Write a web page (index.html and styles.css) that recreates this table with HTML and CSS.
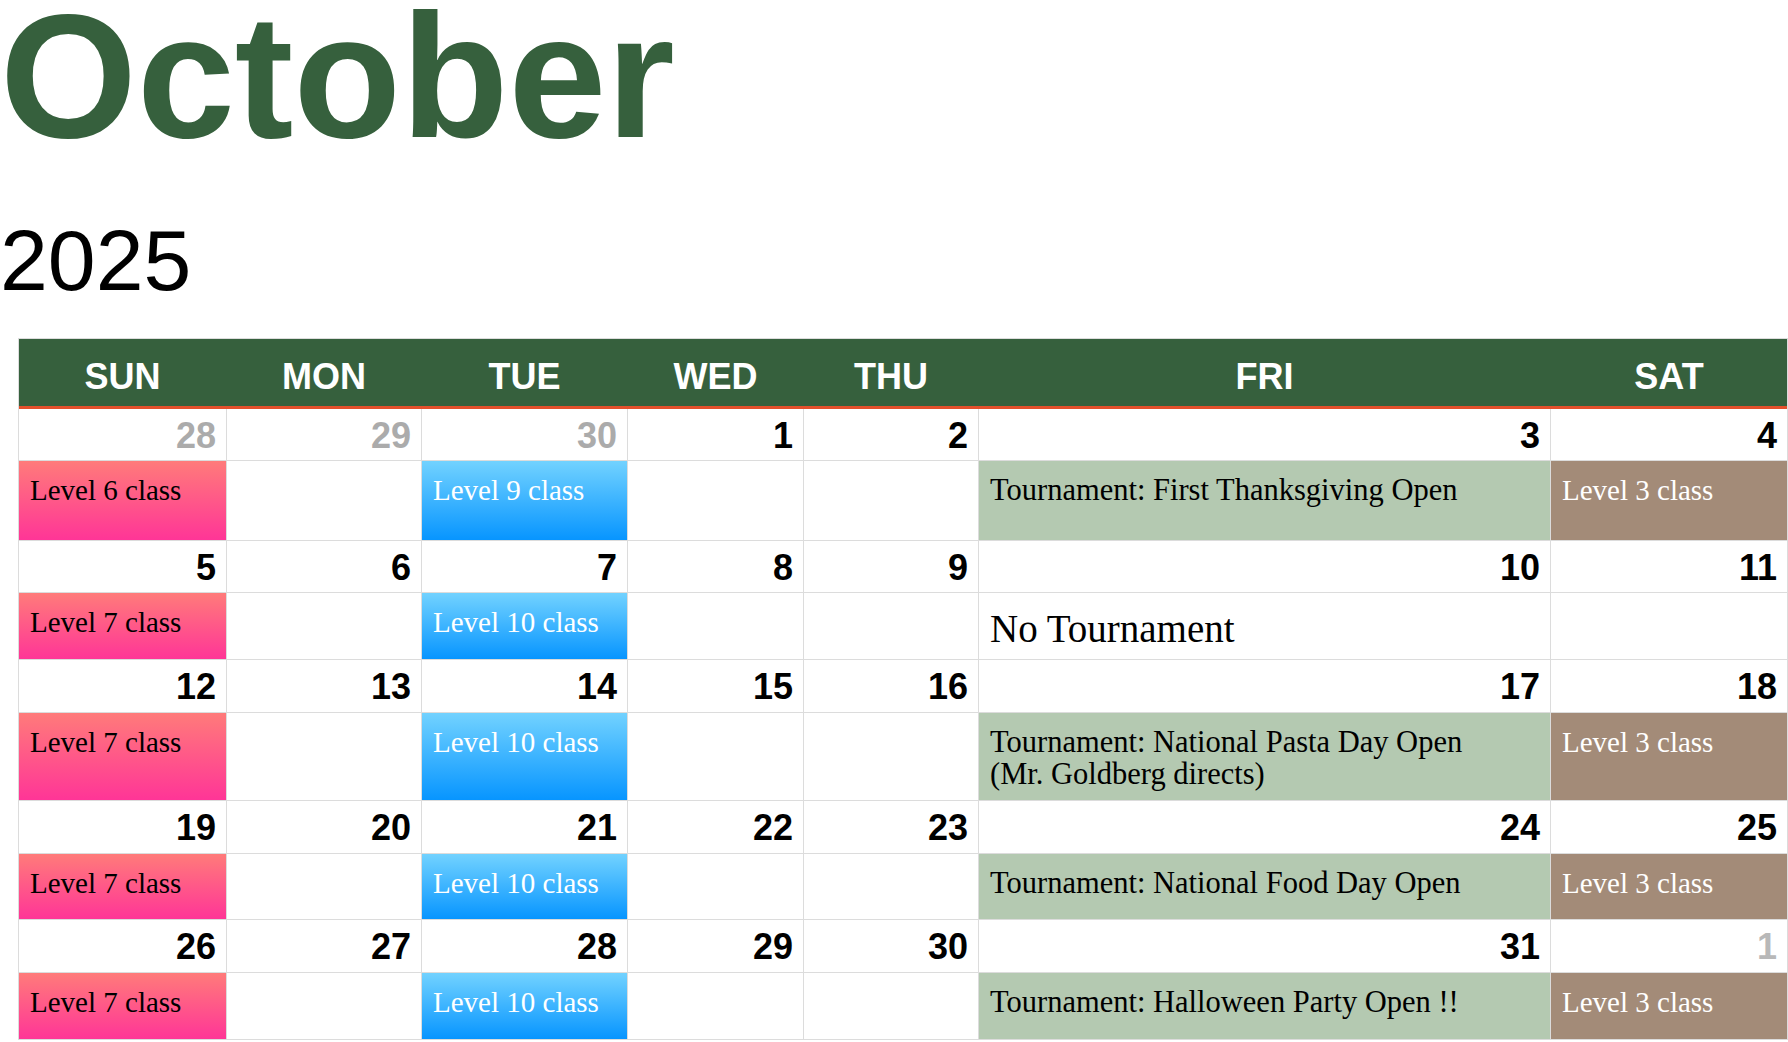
FILE: index.html
```html
<!DOCTYPE html>
<html lang="en">
<head>
<meta charset="utf-8">
<title>October 2025</title>
<link rel="stylesheet" href="styles.css">
</head>
<body>
<h1 class="month">October</h1>
<div class="year">2025</div>

<div class="calendar">
  <div class="head">
    <div>SUN</div><div>MON</div><div>TUE</div><div>WED</div><div>THU</div><div>FRI</div><div>SAT</div>
  </div>
  <div class="grid">
    <div class="d muted">28</div><div class="d muted">29</div><div class="d muted">30</div><div class="d">1</div><div class="d">2</div><div class="d">3</div><div class="d">4</div>
    <div class="ev pink">Level 6 class</div><div class="ev"></div><div class="ev blue">Level 9 class</div><div class="ev"></div><div class="ev"></div><div class="ev sage">Tournament: First Thanksgiving Open</div><div class="ev taupe">Level 3 class</div>

    <div class="d">5</div><div class="d">6</div><div class="d">7</div><div class="d">8</div><div class="d">9</div><div class="d">10</div><div class="d">11</div>
    <div class="ev pink">Level 7 class</div><div class="ev"></div><div class="ev blue">Level 10 class</div><div class="ev"></div><div class="ev"></div><div class="ev big">No Tournament</div><div class="ev"></div>

    <div class="d">12</div><div class="d">13</div><div class="d">14</div><div class="d">15</div><div class="d">16</div><div class="d">17</div><div class="d">18</div>
    <div class="ev pink">Level 7 class</div><div class="ev"></div><div class="ev blue">Level 10 class</div><div class="ev"></div><div class="ev"></div><div class="ev sage">Tournament: National Pasta Day Open<br>(Mr. Goldberg directs)</div><div class="ev taupe">Level 3 class</div>

    <div class="d">19</div><div class="d">20</div><div class="d">21</div><div class="d">22</div><div class="d">23</div><div class="d">24</div><div class="d">25</div>
    <div class="ev pink">Level 7 class</div><div class="ev"></div><div class="ev blue">Level 10 class</div><div class="ev"></div><div class="ev"></div><div class="ev sage">Tournament: National Food Day Open</div><div class="ev taupe">Level 3 class</div>

    <div class="d">26</div><div class="d">27</div><div class="d">28</div><div class="d">29</div><div class="d">30</div><div class="d">31</div><div class="d muted light">1</div>
    <div class="ev pink">Level 7 class</div><div class="ev"></div><div class="ev blue">Level 10 class</div><div class="ev"></div><div class="ev"></div><div class="ev sage">Tournament: Halloween Party Open !!</div><div class="ev taupe">Level 3 class</div>
  </div>
</div>
</body>
</html>
```
FILE: styles.css
```css
html, body {
  margin: 0;
  padding: 0;
  background: #ffffff;
}

body {
  font-family: "Liberation Sans", Arial, sans-serif;
  color: #000;
  overflow: hidden;
}

.month {
  margin: 0;
  padding-top: 1px;
  font: 700 176px/150px "Liberation Sans", Arial, sans-serif;
  color: #36603d;
}

.year {
  margin-top: 59px;
  font: 400 86px/100px "Liberation Sans", Arial, sans-serif;
  color: #000;
}

.calendar {
  margin: 28px 0 0 18px;
  width: 1768px;
  border: 1px solid #dcdcdc;
  border-bottom: none;
}

.head,
.grid {
  display: grid;
  grid-template-columns: 207px 194px 205px 175px 174px 571px 236px;
  column-gap: 1px;
}

.head {
  background: #36603d;
  height: 59px;
  padding-top: 8px;
  border-bottom: 3px solid #e4502c;
}

.head div {
  text-align: center;
  color: #fff;
  font: 700 36px/59px "Liberation Sans", Arial, sans-serif;
}

.grid {
  background: #dcdcdc;
  row-gap: 1px;
  grid-template-rows: 51px 79px 51px 66px 52px 87px 52px 65px 52px 66px;
  border-bottom: 1px solid #dcdcdc;
}

.d {
  background: #fff;
  text-align: right;
  padding-right: 10px;
  font: 700 36px/53px "Liberation Sans", Arial, sans-serif;
  color: #000;
  overflow: hidden;
}

.d.muted {
  color: #ababab;
}

.d.light {
  color: #b8b8b8;
}

.ev {
  background: #fff;
  padding: 13px 10px 0 11px;
  font: 400 29px/32px "Liberation Serif", "Times New Roman", serif;
  color: #000;
  overflow: hidden;
}

.ev.pink {
  background: linear-gradient(to bottom, #ff7b7a 0%, #ff3597 100%);
  color: #000;
}

.ev.blue {
  background: linear-gradient(to bottom, #72d2ff 0%, #0795ff 100%);
  color: #fff;
}

.ev.sage {
  background: #b4c9b1;
  color: #000;
  font-size: 30.5px;
}

.ev.taupe {
  background: #a38b78;
  color: #fff;
}

.ev.big {
  padding-top: 15px;
  font-size: 39px;
  line-height: 42px;
}
```
